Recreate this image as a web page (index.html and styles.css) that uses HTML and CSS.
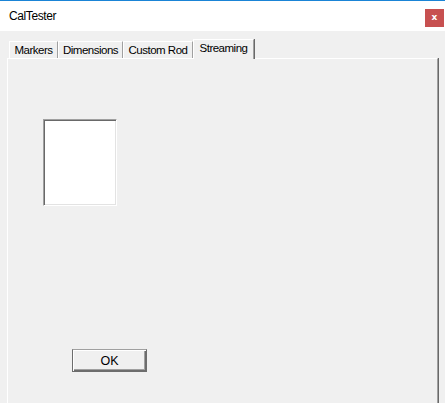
FILE: index.html
```html
<!DOCTYPE html>
<html lang="en">
<head>
    <meta charset="UTF-8">
    <meta name="viewport" content="width=device-width, initial-scale=1.0">
    <title>CalTester</title>
    <link rel="stylesheet" href="styles.css">
</head>
<body>
    <div class="window">
        <div class="titlebar">
            <span class="title">CalTester</span>
            <button class="close-btn">x</button>
        </div>

        <div class="client">
            <div class="tabs">
                <div class="tab tab-markers">Markers</div>
                <div class="tab tab-dimensions">Dimensions</div>
                <div class="tab tab-rod">Custom Rod</div>
                <div class="tab tab-streaming active">Streaming</div>
            </div>

            <div class="panel">
                <div class="preview"></div>
                <button class="ok-btn">OK</button>
            </div>
        </div>
    </div>
</body>
</html>
```

FILE: styles.css
```css
body {
    margin: 0;
    padding: 0;
    width: 445px;
    height: 403px;
    overflow: hidden;
    font-family: 'Liberation Sans', Arial, sans-serif;
    background: #f0f0f0;
    color: #000;
}

.window {
    height: 403px;
    border-top: 1px solid #1a84d6;
    display: flex;
    flex-direction: column;
}

.titlebar {
    height: 30px;
    background: #fff;
    display: flex;
    justify-content: space-between;
    align-items: flex-start;
}

.title {
    font-size: 12px;
    margin: 8px 0 0 9px;
    letter-spacing: -0.4px;
}

.close-btn {
    width: 19px;
    height: 18px;
    margin: 8px 1px 0 0;
    padding: 0 0 2px 0;
    border: none;
    background: #c75050;
    color: #fff;
    font-family: 'DejaVu Sans', sans-serif;
    font-weight: bold;
    font-size: 9px;
    line-height: 16px;
}

.client {
    flex: 1;
    background: #f0f0f0;
    padding-top: 8px;
    display: flex;
    flex-direction: column;
}

.tabs {
    display: flex;
    align-items: flex-end;
    margin-left: 9px;
    height: 19px;
    position: relative;
    z-index: 1;
}

.tab {
    height: 17px;
    box-sizing: border-box;
    border-top: 1px solid #fff;
    border-left: 1px solid #fff;
    border-right: 1px solid #a0a0a0;
    box-shadow: 1px 0 0 #696969;
    font-size: 11.5px;
    line-height: 16px;
    text-align: center;
    letter-spacing: -0.5px;
}

.tab-markers { width: 49px; }
.tab-dimensions { width: 65px; }
.tab-rod { width: 70px; }
.tab-streaming { width: 61px; }

.tab.active {
    height: 20px;
    margin-bottom: -1px;
    background: #f0f0f0;
    line-height: 16px;
}

.panel {
    flex: 1;
    margin-left: 7px;
    width: 431px;
    box-sizing: border-box;
    border-top: 1px solid #fff;
    border-left: 1px solid #fff;
    border-right: 1px solid #a0a0a0;
    box-shadow: 1px 0 0 #696969;
    display: flex;
    flex-direction: column;
    align-items: flex-start;
}

.preview {
    width: 74px;
    height: 87px;
    box-sizing: border-box;
    margin: 60px 0 0 35px;
    background: #fff;
    border-top: 1px solid #a0a0a0;
    border-left: 1px solid #a0a0a0;
    border-bottom: 1px solid #fff;
    border-right: 1px solid #fff;
    box-shadow: inset 1px 1px 0 #696969, inset -1px -1px 0 #e3e3e3;
}

.ok-btn {
    width: 75px;
    height: 23px;
    margin: 143px 0 0 64px;
    padding: 0;
    box-sizing: border-box;
    background: #f0f0f0;
    border: 1px solid #6d6d6d;
    border-top-color: #a0a0a0;
    box-shadow: inset 1px 1px 0 #fff, inset -1px -1px 0 #6d6d6d, inset -2px -2px 0 #a0a0a0;
    font-family: 'Liberation Sans', Arial, sans-serif;
    font-size: 12.5px;
    color: #000;
}
```
